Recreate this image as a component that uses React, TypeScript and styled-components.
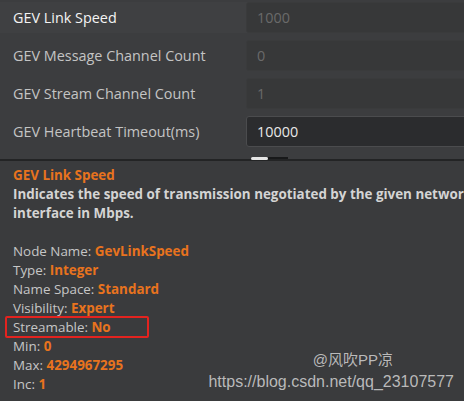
import React from 'react';
import styled, { createGlobalStyle } from 'styled-components';

const GlobalStyle = createGlobalStyle`
  html, body {
    margin: 0;
    padding: 0;
    background: #3a3b3d;
    overflow: hidden;
  }
  body {
    font-family: "Open Sans", "Noto Sans", sans-serif;
  }
`;

type Param = {
  label: string;
  value: string;
  editable?: boolean;
  selected?: boolean;
};

const params: Param[] = [
  { label: 'GEV Link Speed', value: '1000', selected: true },
  { label: 'GEV Message Channel Count', value: '0' },
  { label: 'GEV Stream Channel Count', value: '1' },
  { label: 'GEV Heartbeat Timeout(ms)', value: '10000', editable: true },
];

type Info = { key: string; value: string; marked?: boolean };

const info: Info[] = [
  { key: 'Node Name', value: 'GevLinkSpeed' },
  { key: 'Type', value: 'Integer' },
  { key: 'Name Space', value: 'Standard' },
  { key: 'Visibility', value: 'Expert' },
  { key: 'Streamable', value: 'No', marked: true },
  { key: 'Min', value: '0' },
  { key: 'Max', value: '4294967295' },
  { key: 'Inc', value: '1' },
];

const Page = styled.div`
  position: relative;
  width: 464px;
  height: 401px;
  display: flex;
  flex-direction: column;
  overflow: hidden;
`;

const ParamList = styled.section`
  display: flex;
  flex-direction: column;
  gap: 7px;
  padding-top: 2px;
  height: 159px;
  box-sizing: border-box;
  background: #3c3d3f;
`;

const Row = styled.div<{ $selected?: boolean }>`
  display: grid;
  grid-template-columns: 246px 1fr;
  align-items: center;
  height: 31px;
  background: ${(p) => (p.$selected ? '#3f4042' : 'transparent')};
`;

const Label = styled.span<{ $selected?: boolean }>`
  padding-left: 13px;
  font-size: 14.4px;
  color: ${(p) => (p.$selected ? '#f4f4f4' : '#c4c4c4')};
  white-space: nowrap;
`;

const Field = styled.div<{ $editable?: boolean }>`
  display: flex;
  align-items: center;
  height: 31px;
  box-sizing: border-box;
  margin-right: -6px;
  padding-left: 10px;
  border-radius: 3px;
  font-size: 14.4px;
  background: ${(p) => (p.$editable ? '#2b2c2e' : '#373839')};
  border: 1px solid ${(p) => (p.$editable ? '#4b4c4e' : '#3a3b3c')};
  color: ${(p) => (p.$editable ? '#e8e8e8' : '#6a6a6a')};
`;

const Splitter = styled.div`
  position: relative;
  height: 2px;
  background: #232425;
`;

const Handle = styled.div`
  position: absolute;
  left: 251px;
  top: -2px;
  width: 17px;
  height: 3px;
  border-radius: 2px;
  background: #e6e6e6;
  &::after {
    content: '';
    position: absolute;
    left: 17px;
    top: 0;
    width: 20px;
    height: 2px;
    background: #18191a;
  }
`;

const Details = styled.section`
  flex: 1;
  padding: 5px 0 0 13px;
  background: #3a3b3d;
  font-size: 13.4px;
  line-height: 19px;
  color: #c6c6c6;
`;

const Title = styled.div`
  font-weight: 700;
  color: #e8731e;
`;

const Description = styled.div`
  font-weight: 700;
  color: #d4d4d4;
  white-space: nowrap;
  margin-bottom: 19px;
`;

const InfoLine = styled.div`
  position: relative;
  white-space: nowrap;
`;

const Value = styled.span`
  font-weight: 700;
  color: #e8731e;
`;

const Mark = styled.span`
  position: absolute;
  left: -8px;
  top: -2px;
  width: 144px;
  height: 22px;
  box-sizing: border-box;
  border: 2px solid #e3231f;
  border-radius: 2px;
`;

const Watermark = styled.div`
  position: absolute;
  right: 10px;
  bottom: 8px;
  display: flex;
  flex-direction: column;
  align-items: flex-end;
  color: rgba(210, 210, 210, 0.85);
  pointer-events: none;
`;

const Author = styled.span`
  margin-right: 61px;
  font-family: "Liberation Sans", "Noto Sans CJK SC", sans-serif;
  font-size: 15px;
  line-height: 22px;
`;

const Url = styled.span`
  font-family: "Liberation Sans", sans-serif;
  font-size: 16px;
  line-height: 22px;
`;

const App: React.FC = () => {
  return (
    <Page>
      <GlobalStyle />
      <ParamList>
        {params.map((p) => (
          <Row key={p.label} $selected={p.selected}>
            <Label $selected={p.selected}>{p.label}</Label>
            <Field $editable={p.editable}>{p.value}</Field>
          </Row>
        ))}
      </ParamList>
      <Splitter>
        <Handle />
      </Splitter>
      <Details>
        <Title>GEV Link Speed</Title>
        <Description>
          Indicates the speed of transmission negotiated by the given network
          <br />
          interface in Mbps.
        </Description>
        {info.map((i) => (
          <InfoLine key={i.key}>
            {i.key}: <Value>{i.value}</Value>
            {i.marked ? <Mark /> : null}
          </InfoLine>
        ))}
      </Details>
      <Watermark>
        <Author>@风吹PP凉</Author>
        <Url>https://blog.csdn.net/qq_23107577</Url>
      </Watermark>
    </Page>
  );
};

export default App;
